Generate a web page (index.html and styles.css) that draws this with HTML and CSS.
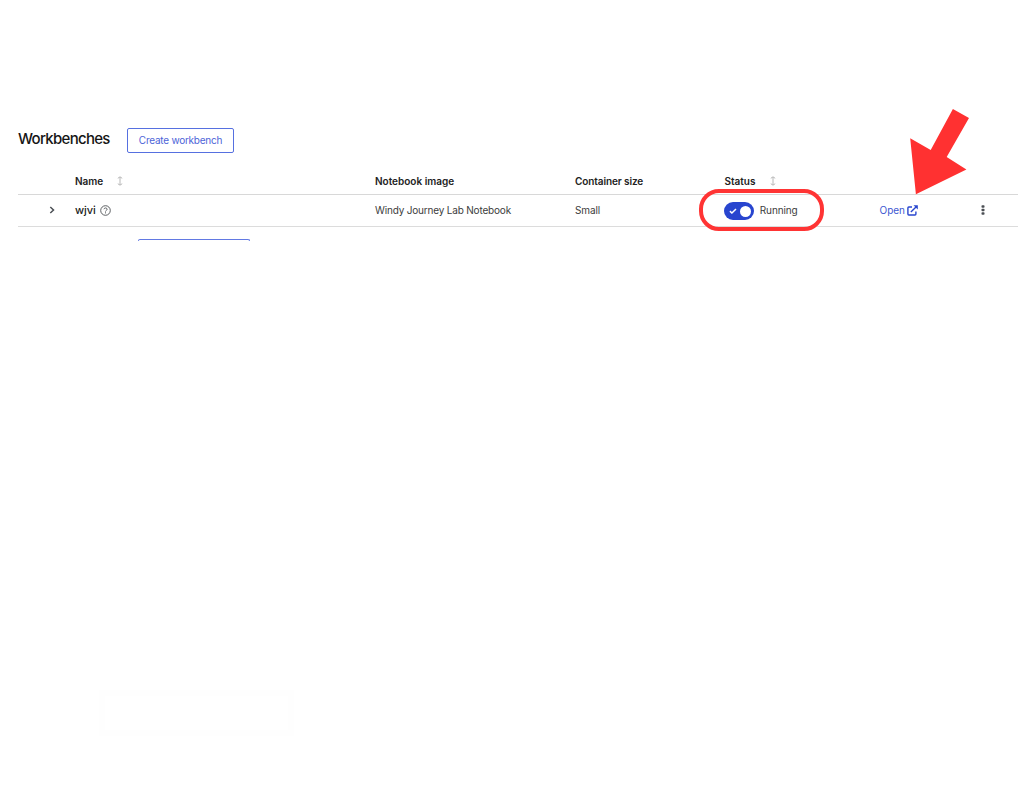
FILE: index.html
```html
<!DOCTYPE html>
<html lang="en">
<head>
<meta charset="utf-8">
<title>Workbenches</title>
<link rel="stylesheet" href="styles.css">
</head>
<body>
<main class="page">
  <header class="section-header">
    <h1 class="title">Workbenches</h1>
    <button class="create">Create workbench</button>
  </header>
  <section class="table">
    <div class="row head">
      <span></span>
      <span class="cell"><span class="h-name">Name</span><svg class="sort" viewBox="0 0 6 10"><path d="M3 1v8M.8 2.3 3 .8l2.2 1.5M.8 7.7 3 9.2l2.2-1.5"/></svg></span>
      <span class="cell"><span class="h-image">Notebook image</span></span>
      <span class="cell"><span class="h-size">Container size</span></span>
      <span class="cell"><span class="h-status">Status</span><svg class="sort" viewBox="0 0 6 10"><path d="M3 1v8M.8 2.3 3 .8l2.2 1.5M.8 7.7 3 9.2l2.2-1.5"/></svg></span>
      <span></span>
      <span></span>
    </div>
    <div class="row body">
      <span class="cell expand"><svg class="chevron" viewBox="0 0 6 8"><path d="M1.3 1 4.5 4 1.3 7"/></svg></span>
      <span class="cell"><span class="wb-name">wjvi</span><svg class="help" viewBox="0 0 11 11"><circle cx="5.5" cy="5.5" r="4.8"/><path d="M3.9 4.2C4.2 2.5 7.1 2.5 7.1 4.3c0 1.1-1.6 1.1-1.6 2.2M5.5 7.3v1.1"/></svg></span>
      <span class="cell"><span class="image">Windy Journey Lab Notebook</span></span>
      <span class="cell"><span class="size">Small</span></span>
      <span class="cell status"><span class="toggle"><svg class="check" viewBox="0 0 8 6"><path d="M.9 3.1 2.9 5 7 1"/></svg><span class="knob"></span></span><span class="running">Running</span><span class="ring"></span></span>
      <span class="cell"><a class="open">Open</a><svg class="external" viewBox="0 0 11 11"><path class="frame" d="M5 2H1.8Q.9 2 .9 2.9v6.2q0 .9.9.9H8q.9 0 .9-.9V6.5"/><path class="shaft" d="M3.9 7.1 9 2"/><path class="tip" d="M6.5.2h4.3v4.3z"/></svg></span>
      <span class="cell"><svg class="kebab" viewBox="0 0 4 10"><rect x=".5" y=".2" width="3" height="2.6" rx=".8"/><rect x=".5" y="3.7" width="3" height="2.6" rx=".8"/><rect x=".5" y="7.2" width="3" height="2.6" rx=".8"/></svg></span>
    </div>
  </section>
  <div class="next-section"><div class="button-edge"></div></div>
  <div class="faint-box"></div>
  <svg class="arrow" viewBox="0 0 57 85"><path d="M42.9 0 59 9.1 36.7 48 56.4 60.5 5.9 85.2.2 29.2 20.7 41z"/></svg>
</main>
</body>
</html>
```
FILE: styles.css
```css
* { box-sizing: border-box; }
body { margin: 0; background: #fff; color: #222; font: 10px/14px Inter, "Open Sans", sans-serif; }
.page { position: relative; width: 1029px; height: 793px; padding: 128px 11px 0 18px; overflow: hidden; }
span, a, button, h1 { white-space: nowrap; }
.section-header { display: flex; height: 40px; align-items: flex-start; }
.title { width: 109px; margin: 0; font-size: 15px; font-weight: 500; line-height: 22px; letter-spacing: -.7px; color: #151515; }
.create { width: 107px; height: 25px; padding: 0 0 1px; background: #fff; border: 1px solid #5670e0; border-radius: 2px; color: #4d64d8; font: 10px/21px Inter, sans-serif; letter-spacing: -.24px; }
.row { display: grid; grid-template-columns: 57px 300px 200px 149.5px 155px 100px 1fr; align-items: center; }
.head { height: 27px; padding-bottom: 1px; border-bottom: 1px solid #d8d8d8; font-weight: 600; }
.body { height: 32px; padding-bottom: 1px; border-bottom: 1px solid #dcdcdc; }
.cell { display: flex; align-items: center; }
svg { display: block; flex: none; fill: none; }
.sort { width: 6px; height: 10px; margin-left: 14px; stroke: #b8b8b8; stroke-width: 1; }
.h-name { width: 28px; }
.h-status { width: 31px; }
.h-size { letter-spacing: -.1px; }
.expand { padding-left: 31px; }
.chevron { width: 6px; height: 8px; stroke: #4b4f54; stroke-width: 1.5; }
.wb-name { width: 25px; font-size: 11px; font-weight: 500; letter-spacing: -.1px; }
.help { width: 11px; height: 11px; stroke: #55585c; stroke-width: .95; }
.image, .size, .running { color: #3c3c3c; }
.image { letter-spacing: -.18px; }
.size { letter-spacing: -.1px; }
.status { position: relative; }
.toggle { display: flex; align-items: center; justify-content: space-between; width: 29.5px; height: 17.5px; margin: 2px 0 0 -.2px; padding: 0 3px 0 5px; border-radius: 9px; background: #2845cf; }
.check { width: 8px; height: 6px; stroke: #fff; stroke-width: 1.5; }
.knob { width: 11px; height: 11px; border-radius: 50%; background: #fff; }
.running { margin-left: 6px; letter-spacing: -.13px; }
.ring { position: absolute; left: -25.5px; top: -11px; width: 125px; height: 42px; border: 4px solid #ff3434; border-radius: 20px; }
.open { width: 27.5px; color: #4058d2; }
.external { width: 11px; height: 11px; }
.frame, .shaft { stroke: #2946cf; stroke-width: 1.4; }
.tip { fill: #2946cf; }
.kebab { width: 4px; height: 10px; margin-left: 1.5px; fill: #4b4f54; }
.next-section { padding: 12px 0 0 120px; }
.button-edge { width: 112px; height: 2px; border: 1px solid #6279e3; border-bottom: 0; border-radius: 2px 2px 0 0; }
.faint-box { position: absolute; left: 99px; top: 690px; width: 195px; height: 46px; border: 6px solid #fefefe; }
.arrow { position: absolute; left: 910px; top: 109px; width: 57px; height: 85px; fill: #ff3131; overflow: visible; }
```
